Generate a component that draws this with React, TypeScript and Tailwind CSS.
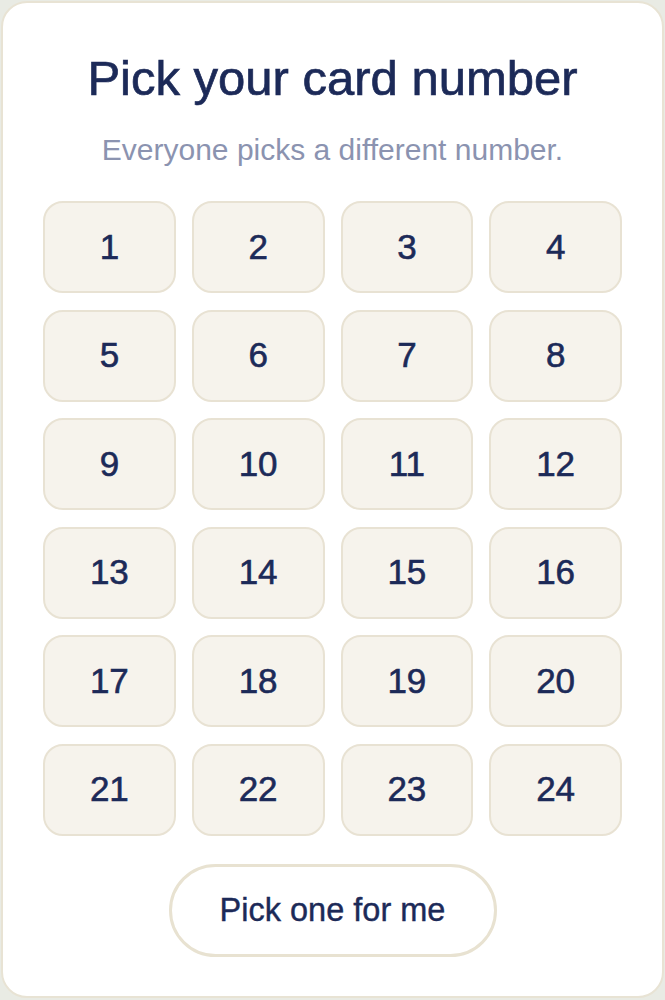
import React from 'react';

const numbers = Array.from({ length: 24 }, (_, i) => i + 1);

export default function App() {
  return (
    <div className="min-h-[1000px] bg-[#e9ebe4] p-[1px]">
      <div
        className="flex h-[997px] flex-col items-center rounded-[26px] border-2 border-[#e8e3d4] bg-white px-[40px] pt-[51px]"
        style={{ fontFamily: '"Liberation Sans", Arial, sans-serif' }}
      >
        {/* Heading */}
        <h1 className="text-[49px] leading-[49px] text-[#1c2a58] [-webkit-text-stroke:0.7px_#1c2a58]">
          Pick your card number
        </h1>
        <p className="mt-[32px] text-[30px] leading-[30px] text-[#8b93b0]">
          Everyone picks a different number.
        </p>

        {/* Number grid */}
        <div className="mt-[36px] grid w-full grid-cols-4 gap-x-[16px] gap-y-[16.5px]">
          {numbers.map((n) => (
            <button
              key={n}
              className="flex h-[92px] items-center justify-center rounded-[20px] border-2 border-[#e8e2d3] bg-[#f6f3ec] text-[35px] text-[#1c2a58] [-webkit-text-stroke:0.6px_#1c2a58]"
            >
              {n}
            </button>
          ))}
        </div>

        {/* Random pick */}
        <button className="mt-[28px] flex h-[93px] w-[328px] items-center justify-center rounded-full border-[3px] border-[#e8e2d1] bg-white text-[32.5px] text-[#1c2a58] [-webkit-text-stroke:0.4px_#1c2a58]">
          Pick one for me
        </button>
      </div>
    </div>
  );
}
